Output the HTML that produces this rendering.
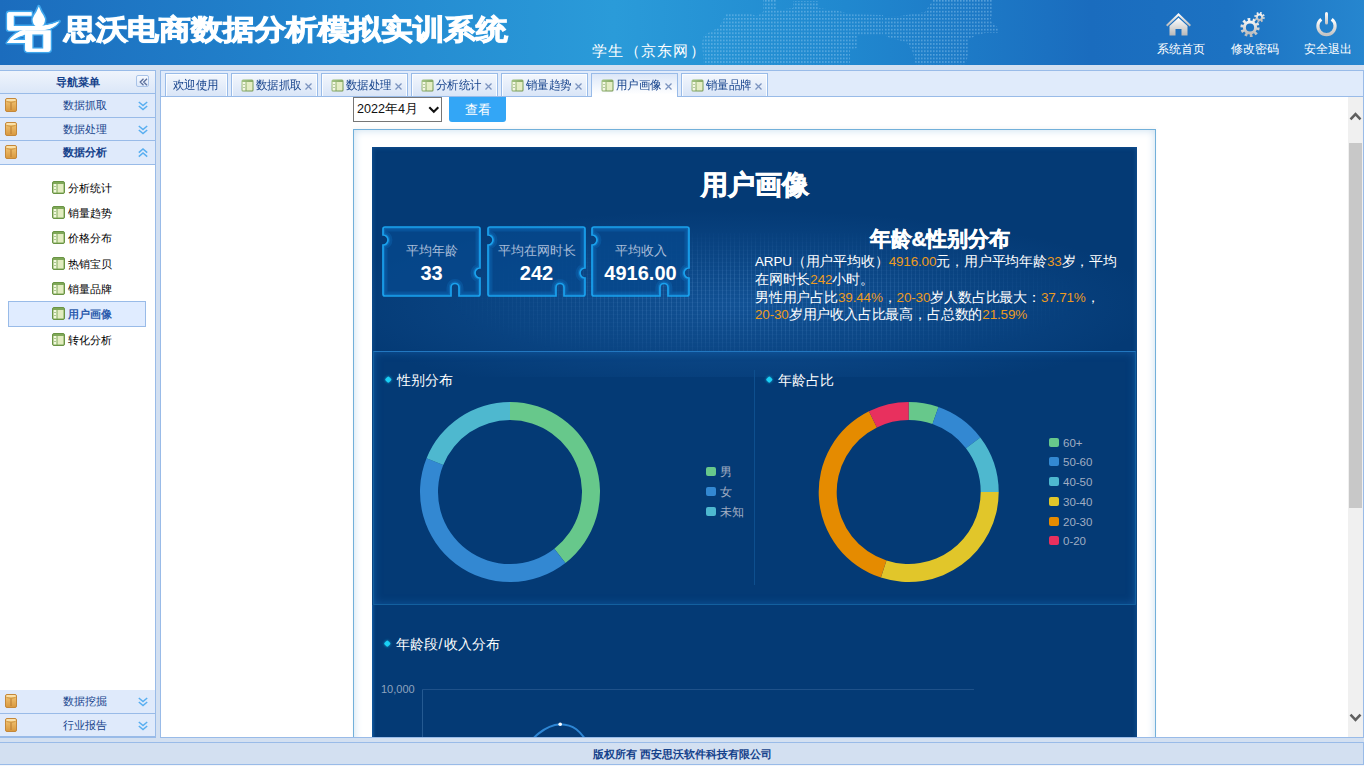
<!DOCTYPE html>
<html><head><meta charset="utf-8">
<style>
*{box-sizing:border-box;margin:0;padding:0}
html,body{width:1364px;height:766px;overflow:hidden;background:#d3e0f1;font-family:"Liberation Sans",sans-serif;font-size:12px}
.abs{position:absolute}
#hdr{left:0;top:0;width:1364px;height:65px;background:linear-gradient(90deg,#1b6cbd 0%,#2387cf 25%,#2a9bd9 45%,#2088cf 62%,#1a6cbe 80%,#1c72c2 90%,#2686cf 100%)}
#title{left:64px;top:10.5px;transform:scaleY(0.88);transform-origin:0 0;font-size:32px;font-weight:bold;color:#fff;letter-spacing:-0.3px;white-space:nowrap;-webkit-text-stroke:1.1px #fff;text-shadow:0 0 2px #3da4ea,0 0 2px #3da4ea}
#role{left:592px;top:42px;font-size:15px;color:#fff;letter-spacing:1.3px;white-space:nowrap}
.hbtn{top:41px;font-size:12px;color:#fff;white-space:nowrap;text-align:center;width:60px}
#side{left:0;top:70px;width:156px;height:668px;background:#fff;border-right:1px solid #99bbe8;border-top:1px solid #99bbe8;border-bottom:2px solid #99bbe8}
.shead{left:0;width:155px;font-size:11.4px;background:linear-gradient(#eff4fc,#dbe7f8);border-bottom:1px solid #99bbe8;color:#15428b;font-weight:bold;text-align:center}
.acc{left:0;width:155px;height:23px;background:#dfeafb;border-bottom:1px solid #99bbe8;color:#15428b;font-size:11.4px;text-align:center;line-height:22px}
.acc .ic{position:absolute;left:5px;top:4px}
.acc .ch{position:absolute;left:138px;top:6.5px;width:10px;height:10px}
.node{left:52px;width:70px;height:20px;color:#000;white-space:nowrap}
.nt{left:16px;top:2px;line-height:16px;font-size:10.6px}
.node.sel .nt{color:#2d5cad;font-weight:bold}
#selnode{left:8px;top:301px;width:138px;height:26px;background:#e0ecff;border:1px solid #99bbe8}
.al{position:absolute;left:63px;top:0}
#coll{left:136px;top:4px;width:13px;height:12px;border:1px solid #a9c3e8;border-radius:2px;background:linear-gradient(#f7faff,#dde8f8)}
#main{left:160px;top:70px;width:1204px;height:668px;background:#fff;border:1px solid #99bbe8}
#tabs{left:161px;top:71px;width:1202px;height:26px;background:#e0ebfb;border-bottom:1px solid #99bbe8}
.tab{top:73px;height:23px;border:1px solid #99bbe8;border-bottom:none;background:linear-gradient(#f3f7fd,#d9e5f7);box-shadow:inset 1px 1px 0 #fbfdff,inset -1px 0 0 #fbfdff;color:#15428b;font-size:12px;white-space:nowrap}
.tab.sel{background:linear-gradient(#dce7f8,#ffffff 85%);height:25px;box-shadow:none}
.tt{top:3px;line-height:16px;font-size:11.5px;transform:scaleX(0.955);transform-origin:0 0}
.tx{left:72.5px;top:8.5px}
#footer{left:0;top:742px;width:1364px;height:23px;border-top:1px solid #99bbe8;border-bottom:1px solid #99bbe8;background:#d3e0f1;text-align:center;color:#15428b;font-weight:bold;line-height:23px;font-size:10.9px;padding-left:2px;border-right:1px solid #99bbe8}
#content{left:161px;top:97px;width:1187px;height:640px;overflow:hidden;background:#fff}
#scroll{left:1348px;top:97px;width:15px;height:640px;background:#f0f0f0}
#thumb{left:1349px;top:143px;width:13px;height:365px;background:#c8c8c8}
#sel{left:192px;top:0px;width:89px;height:25px;border:1px solid #767676;background:#fff;font-size:12.6px;line-height:23px;padding-left:3px;color:#111}
#btn{left:288px;top:0px;width:57px;height:25px;background:#33a6f6;border-radius:0 0 3px 3px;color:#fff;text-align:center;line-height:25px;font-size:13px}
#frame{left:192px;top:32px;width:803px;height:620px;border:1px solid #72b0da;background:#fff;box-shadow:inset 0 0 8px #c6ddef,0 -2px 4px rgba(0,0,0,0.03)}
#panel{left:211px;top:50px;width:765px;height:600px;background:#043a75;overflow:hidden;box-shadow:inset 0 0 5px rgba(50,130,210,0.42)}

#glow{left:0px;top:40px;width:765px;height:190px;background:radial-gradient(ellipse 55% 50% at 48% 62%,rgba(40,120,200,0.38),rgba(40,120,200,0) 100%)}
#grid{left:60px;top:86px;width:640px;height:118px;background:repeating-linear-gradient(90deg,rgba(150,200,255,0.13) 0 1px,transparent 1px 4.2px),repeating-linear-gradient(0deg,rgba(150,200,255,0.05) 0 1px,transparent 1px 4px);-webkit-mask-image:radial-gradient(ellipse 50% 60% at 52% 55%,#000 30%,transparent 100%)}
#ptitle{left:0;top:19.5px;width:765px;text-align:center;font-size:27px;font-weight:bold;color:#fff;line-height:36px;-webkit-text-stroke:0.7px #fff}
.card{width:99px;height:71px}
.clab{left:0;top:15.7px;width:99px;text-align:center;color:#a9bdd9;font-size:13px;line-height:18px;white-space:nowrap}
.cval{left:0;top:35px;width:99px;text-align:center;color:#fff;font-size:20px;font-weight:bold;line-height:24px}
#rtitle{left:383px;top:78.5px;width:370px;text-align:center;font-size:20.6px;font-weight:bold;color:#fff;line-height:26px;-webkit-text-stroke:0.5px #fff}
#para{left:383px;top:106px;width:380px;font-size:13.5px;line-height:17.8px;color:#fff;white-space:nowrap;letter-spacing:-0.17px}
#para .o{color:#ec9b1f}
#sec2{left:1px;top:204px;width:763px;height:254px;border:1px solid #13609f;border-top-color:#2277c0;box-shadow:inset 0 0 9px rgba(30,120,205,0.42)}
#vdiv{left:382px;top:223px;width:1px;height:215px;background:#0e4f8e}
.dot{width:4.6px;height:4.6px;margin:0.7px;border-radius:1.2px;transform:rotate(45deg);background:#1ad0f5;box-shadow:0 0 3px rgba(26,208,245,0.8)}
.stitle{font-size:14px;color:#fff;line-height:18px;white-space:nowrap}
.lg{width:9.5px;height:9px;border-radius:2px}
.lt{font-size:11.5px;color:#a0adc2;line-height:16px;white-space:nowrap;margin-left:1px}
#sec3{left:0px;top:458px;width:3px;height:300px;background:linear-gradient(90deg,rgba(30,120,205,0.35),rgba(30,120,205,0))}
#ylab{left:9px;top:536px;font-size:11px;color:#8ea3be;line-height:13px}
</style></head><body>
<div id="hdr" class="abs"></div>
<svg class="abs" style="left:0;top:0" width="1364" height="65"><defs><pattern id="dots" width="3" height="3.6" patternUnits="userSpaceOnUse"><rect width="1.6" height="1.6" fill="#a8d8f8" fill-opacity="0.4"/></pattern></defs><polygon points="702,43 704,35 714,30 719,27 727,13 748,13 757,16 763,12 763,0 777,0 777,10 793,8 793,1 818,1 818,8 835,10 850,14 883,15 883,35 858,36 857,48 850,50 850,65 704,65" fill="url(#dots)"/><polygon points="884,17 900,16 912,14 925,12 933,0 993,0 993,15 990,20 998,28 998,33 985,33 975,36 968,40 968,56 965,65 916,65 912,50 906,42 890,38 884,35" fill="url(#dots)"/></svg>
<svg class="abs" style="left:0;top:0" width="64" height="60" viewBox="0 0 64 60">
<g fill="#fff" stroke="#3fa6ec" stroke-width="3.2" stroke-linejoin="round" style="paint-order:stroke">
<path d="M7.3 14 Q7.3 12.2 9.2 12.2 H31.5 V15.5 H13.5 V26 H33 Q47 26.5 59.3 21.4 Q54 28.5 45 30 L33 30.5 H9 Q7.3 30.5 7.3 28.5 Z"/>
<path d="M25.5 29.5 Q14 32 7 43 H25.6 V40 H12.5 Q19 35.5 25.5 34.5 Z"/>
<path d="M25.2 30.5 H50.5 V49 Q50.5 51.7 48 51.7 H27.7 Q25.2 51.7 25.2 49 Z M32.2 34.2 V48.8 H43.5 V34.2 Z" fill-rule="evenodd"/>
<path d="M38.8 6.4 Q41 12 43.5 15.5 Q45.5 18.5 44.8 21.5 Q43.8 26.9 38.8 26.9 Q33.8 26.9 32.8 21.5 Q32.1 18.5 34.1 15.5 Q36.6 12 38.8 6.4 Z"/>
</g>
<g fill="#fff"><path d="M7.3 14 Q7.3 12.2 9.2 12.2 H31.5 V15.5 H13.5 V26 H33 Q47 26.5 59.3 21.4 Q54 28.5 45 30 L33 30.5 H9 Q7.3 30.5 7.3 28.5 Z"/><path d="M25.5 29.5 Q14 32 7 43 H25.6 V40 H12.5 Q19 35.5 25.5 34.5 Z"/><path d="M25.2 30.5 H50.5 V49 Q50.5 51.7 48 51.7 H27.7 Q25.2 51.7 25.2 49 Z M32.2 34.2 V48.8 H43.5 V34.2 Z" fill-rule="evenodd"/></g>
</svg>
<svg class="abs" style="left:1165px;top:12px" width="27" height="25" viewBox="0 0 27 25"><defs><linearGradient id="hg" x1="0" y1="0" x2="0" y2="1"><stop offset="0" stop-color="#ffffff"/><stop offset="1" stop-color="#b8b8b8"/></linearGradient></defs><path d="M13.5 1 L26 13 L24.6 14.4 L13.5 4 L2.4 14.4 L1 13 Z" fill="url(#hg)"/><path d="M4.5 14 L13.5 5.8 L22.5 14 V23.5 H16.5 V17 H10.5 V23.5 H4.5 Z" fill="url(#hg)"/></svg>
<svg class="abs" style="left:1240px;top:11px" width="26" height="27" viewBox="0 0 26 27"><defs><linearGradient id="gg" x1="0" y1="0" x2="0" y2="1"><stop offset="0" stop-color="#f4f4f4"/><stop offset="1" stop-color="#bdbdbd"/></linearGradient></defs>
<g fill="none" stroke="url(#gg)"><circle cx="10" cy="16.5" r="5.6" stroke-width="3"/><circle cx="10" cy="16.5" r="8" stroke-width="3.2" stroke-dasharray="2.6 2.42"/><circle cx="19.5" cy="6.2" r="2.7" stroke-width="2"/><circle cx="19.5" cy="6.2" r="4.3" stroke-width="2" stroke-dasharray="1.7 1.68"/></g></svg>
<svg class="abs" style="left:1315px;top:11px" width="23" height="27" viewBox="0 0 23 27"><defs><linearGradient id="pg" x1="0" y1="0" x2="0" y2="1"><stop offset="0" stop-color="#ffffff"/><stop offset="1" stop-color="#c4c4c4"/></linearGradient></defs><path d="M6.3 8.2 A8.6 8.6 0 1 0 16.7 8.2" fill="none" stroke="url(#pg)" stroke-width="3.2"/><rect x="10" y="1" width="3" height="12.5" rx="1.5" fill="url(#pg)"/></svg>
<div id="title" class="abs">思沃电商数据分析模拟实训系统</div>
<div id="role" class="abs">学生（京东网）</div>
<div class="abs hbtn" style="left:1151px">系统首页</div>
<div class="abs hbtn" style="left:1225px">修改密码</div>
<div class="abs hbtn" style="left:1298px">安全退出</div>

<div id="side" class="abs"></div>
<div class="abs shead" style="top:71px;height:23px;line-height:22px">导航菜单<div class="abs" id="coll"><svg class="abs" style="left:2px;top:2px" width="9" height="8" viewBox="0 0 9 8"><path d="M4.5 0.8 L1.2 4 L4.5 7.2 M8 0.8 L4.7 4 L8 7.2" fill="none" stroke="#5c6f9c" stroke-width="1.3"/></svg></div></div>
<div class="abs acc" style="top:94px;height:24px"><svg class="ic" width="12" height="14" viewBox="0 0 12 14"><defs><linearGradient id="og" x1="0" y1="0" x2="0" y2="1"><stop offset="0" stop-color="#f4c878"/><stop offset="1" stop-color="#d8983e"/></linearGradient></defs><rect x="0.5" y="0.5" width="11" height="13" rx="1.5" fill="url(#og)" stroke="#c4883a" stroke-width="1"/><path d="M1.5 2 H10.5" stroke="#fff1c8" stroke-width="1.3"/><path d="M1.5 3.5 Q6 5.5 10.5 3.5" fill="none" stroke="#c8903e" stroke-width="0.8"/><path d="M6 4.8 V12" stroke="#b87a30" stroke-width="1"/></svg><span class="al">数据抓取</span><svg class="ch" width="10" height="10" viewBox="0 0 10 10"><path d="M0.8 1 L5 4.6 L9.2 1 M0.8 5 L5 8.6 L9.2 5" fill="none" stroke="#58aef0" stroke-width="1.5"/></svg></div>
<div class="abs acc" style="top:118px"><svg class="ic" width="12" height="14" viewBox="0 0 12 14"><defs><linearGradient id="og" x1="0" y1="0" x2="0" y2="1"><stop offset="0" stop-color="#f4c878"/><stop offset="1" stop-color="#d8983e"/></linearGradient></defs><rect x="0.5" y="0.5" width="11" height="13" rx="1.5" fill="url(#og)" stroke="#c4883a" stroke-width="1"/><path d="M1.5 2 H10.5" stroke="#fff1c8" stroke-width="1.3"/><path d="M1.5 3.5 Q6 5.5 10.5 3.5" fill="none" stroke="#c8903e" stroke-width="0.8"/><path d="M6 4.8 V12" stroke="#b87a30" stroke-width="1"/></svg><span class="al">数据处理</span><svg class="ch" width="10" height="10" viewBox="0 0 10 10"><path d="M0.8 1 L5 4.6 L9.2 1 M0.8 5 L5 8.6 L9.2 5" fill="none" stroke="#58aef0" stroke-width="1.5"/></svg></div>
<div class="abs acc" style="top:141px;height:24px;font-weight:bold"><svg class="ic" width="12" height="14" viewBox="0 0 12 14"><defs><linearGradient id="og" x1="0" y1="0" x2="0" y2="1"><stop offset="0" stop-color="#f4c878"/><stop offset="1" stop-color="#d8983e"/></linearGradient></defs><rect x="0.5" y="0.5" width="11" height="13" rx="1.5" fill="url(#og)" stroke="#c4883a" stroke-width="1"/><path d="M1.5 2 H10.5" stroke="#fff1c8" stroke-width="1.3"/><path d="M1.5 3.5 Q6 5.5 10.5 3.5" fill="none" stroke="#c8903e" stroke-width="0.8"/><path d="M6 4.8 V12" stroke="#b87a30" stroke-width="1"/></svg><span class="al">数据分析</span><svg class="ch" width="10" height="10" viewBox="0 0 10 10"><path d="M0.8 4.6 L5 1 L9.2 4.6 M0.8 8.6 L5 5 L9.2 8.6" fill="none" stroke="#58aef0" stroke-width="1.5"/></svg></div>
<div class="abs acc" style="top:690px;height:24px"><svg class="ic" width="12" height="14" viewBox="0 0 12 14"><defs><linearGradient id="og" x1="0" y1="0" x2="0" y2="1"><stop offset="0" stop-color="#f4c878"/><stop offset="1" stop-color="#d8983e"/></linearGradient></defs><rect x="0.5" y="0.5" width="11" height="13" rx="1.5" fill="url(#og)" stroke="#c4883a" stroke-width="1"/><path d="M1.5 2 H10.5" stroke="#fff1c8" stroke-width="1.3"/><path d="M1.5 3.5 Q6 5.5 10.5 3.5" fill="none" stroke="#c8903e" stroke-width="0.8"/><path d="M6 4.8 V12" stroke="#b87a30" stroke-width="1"/></svg><span class="al">数据挖掘</span><svg class="ch" width="10" height="10" viewBox="0 0 10 10"><path d="M0.8 1 L5 4.6 L9.2 1 M0.8 5 L5 8.6 L9.2 5" fill="none" stroke="#58aef0" stroke-width="1.5"/></svg></div>
<div class="abs acc" style="top:714px;height:22px;border-bottom:none"><svg class="ic" width="12" height="14" viewBox="0 0 12 14"><defs><linearGradient id="og" x1="0" y1="0" x2="0" y2="1"><stop offset="0" stop-color="#f4c878"/><stop offset="1" stop-color="#d8983e"/></linearGradient></defs><rect x="0.5" y="0.5" width="11" height="13" rx="1.5" fill="url(#og)" stroke="#c4883a" stroke-width="1"/><path d="M1.5 2 H10.5" stroke="#fff1c8" stroke-width="1.3"/><path d="M1.5 3.5 Q6 5.5 10.5 3.5" fill="none" stroke="#c8903e" stroke-width="0.8"/><path d="M6 4.8 V12" stroke="#b87a30" stroke-width="1"/></svg><span class="al">行业报告</span><svg class="ch" width="10" height="10" viewBox="0 0 10 10"><path d="M0.8 1 L5 4.6 L9.2 1 M0.8 5 L5 8.6 L9.2 5" fill="none" stroke="#58aef0" stroke-width="1.5"/></svg></div>

<div class="abs" id="selnode"></div>
<div class="abs node" style="top:178.0px"><svg class="abs" style="left:0;top:3px" width="13" height="13" viewBox="0 0 13 13"><rect x="0.5" y="0.5" width="12" height="12" rx="1.5" fill="#7fa858" stroke="#6a9444" stroke-width="1"/><rect x="1.5" y="3" width="3" height="8.5" fill="#f2f8de"/><rect x="5.5" y="3" width="6" height="8.5" fill="#e2ecc0"/><rect x="2.5" y="5" width="1" height="1" fill="#6a9444"/><rect x="2.5" y="8" width="1" height="1" fill="#6a9444"/></svg><span class="abs nt">分析统计</span></div>
<div class="abs node" style="top:203.0px"><svg class="abs" style="left:0;top:3px" width="13" height="13" viewBox="0 0 13 13"><rect x="0.5" y="0.5" width="12" height="12" rx="1.5" fill="#7fa858" stroke="#6a9444" stroke-width="1"/><rect x="1.5" y="3" width="3" height="8.5" fill="#f2f8de"/><rect x="5.5" y="3" width="6" height="8.5" fill="#e2ecc0"/><rect x="2.5" y="5" width="1" height="1" fill="#6a9444"/><rect x="2.5" y="8" width="1" height="1" fill="#6a9444"/></svg><span class="abs nt">销量趋势</span></div>
<div class="abs node" style="top:228.3px"><svg class="abs" style="left:0;top:3px" width="13" height="13" viewBox="0 0 13 13"><rect x="0.5" y="0.5" width="12" height="12" rx="1.5" fill="#7fa858" stroke="#6a9444" stroke-width="1"/><rect x="1.5" y="3" width="3" height="8.5" fill="#f2f8de"/><rect x="5.5" y="3" width="6" height="8.5" fill="#e2ecc0"/><rect x="2.5" y="5" width="1" height="1" fill="#6a9444"/><rect x="2.5" y="8" width="1" height="1" fill="#6a9444"/></svg><span class="abs nt">价格分布</span></div>
<div class="abs node" style="top:253.5px"><svg class="abs" style="left:0;top:3px" width="13" height="13" viewBox="0 0 13 13"><rect x="0.5" y="0.5" width="12" height="12" rx="1.5" fill="#7fa858" stroke="#6a9444" stroke-width="1"/><rect x="1.5" y="3" width="3" height="8.5" fill="#f2f8de"/><rect x="5.5" y="3" width="6" height="8.5" fill="#e2ecc0"/><rect x="2.5" y="5" width="1" height="1" fill="#6a9444"/><rect x="2.5" y="8" width="1" height="1" fill="#6a9444"/></svg><span class="abs nt">热销宝贝</span></div>
<div class="abs node" style="top:278.5px"><svg class="abs" style="left:0;top:3px" width="13" height="13" viewBox="0 0 13 13"><rect x="0.5" y="0.5" width="12" height="12" rx="1.5" fill="#7fa858" stroke="#6a9444" stroke-width="1"/><rect x="1.5" y="3" width="3" height="8.5" fill="#f2f8de"/><rect x="5.5" y="3" width="6" height="8.5" fill="#e2ecc0"/><rect x="2.5" y="5" width="1" height="1" fill="#6a9444"/><rect x="2.5" y="8" width="1" height="1" fill="#6a9444"/></svg><span class="abs nt">销量品牌</span></div>
<div class="abs node sel" style="top:304.0px"><svg class="abs" style="left:0;top:3px" width="13" height="13" viewBox="0 0 13 13"><rect x="0.5" y="0.5" width="12" height="12" rx="1.5" fill="#7fa858" stroke="#6a9444" stroke-width="1"/><rect x="1.5" y="3" width="3" height="8.5" fill="#f2f8de"/><rect x="5.5" y="3" width="6" height="8.5" fill="#e2ecc0"/><rect x="2.5" y="5" width="1" height="1" fill="#6a9444"/><rect x="2.5" y="8" width="1" height="1" fill="#6a9444"/></svg><span class="abs nt">用户画像</span></div>
<div class="abs node" style="top:330.0px"><svg class="abs" style="left:0;top:3px" width="13" height="13" viewBox="0 0 13 13"><rect x="0.5" y="0.5" width="12" height="12" rx="1.5" fill="#7fa858" stroke="#6a9444" stroke-width="1"/><rect x="1.5" y="3" width="3" height="8.5" fill="#f2f8de"/><rect x="5.5" y="3" width="6" height="8.5" fill="#e2ecc0"/><rect x="2.5" y="5" width="1" height="1" fill="#6a9444"/><rect x="2.5" y="8" width="1" height="1" fill="#6a9444"/></svg><span class="abs nt">转化分析</span></div>
<div id="main" class="abs"></div>
<div id="tabs" class="abs"></div>
<div class="abs tab" style="left:165px;width:63px"><span class="abs tt" style="left:7px">欢迎使用</span></div>
<div class="abs tab" style="left:231px;width:87px"><svg class="abs" style="left:9px;top:5px" width="13" height="13" viewBox="0 0 13 13"><defs><linearGradient id="ig1" x1="0" y1="0" x2="1" y2="1"><stop offset="0" stop-color="#a8c888"/><stop offset="1" stop-color="#6a8e48"/></linearGradient></defs><rect x="0.5" y="0.5" width="12" height="12" rx="1.5" fill="url(#ig1)"/><rect x="1.5" y="3" width="3" height="8.5" fill="#f4f8e4"/><rect x="5.5" y="3" width="6" height="8.5" fill="#e4edc4"/><rect x="2.5" y="5" width="1" height="1" fill="#7a9a58"/><rect x="2.5" y="8" width="1" height="1" fill="#7a9a58"/></svg><span class="abs tt" style="left:23.5px">数据抓取</span><svg class="abs tx" width="7" height="7" viewBox="0 0 7 7"><path d="M0.5 0.5 L6.5 6.5 M6.5 0.5 L0.5 6.5" stroke="#7b93bf" stroke-width="1.3"/></svg></div>
<div class="abs tab" style="left:321px;width:87px"><svg class="abs" style="left:9px;top:5px" width="13" height="13" viewBox="0 0 13 13"><defs><linearGradient id="ig2" x1="0" y1="0" x2="1" y2="1"><stop offset="0" stop-color="#a8c888"/><stop offset="1" stop-color="#6a8e48"/></linearGradient></defs><rect x="0.5" y="0.5" width="12" height="12" rx="1.5" fill="url(#ig2)"/><rect x="1.5" y="3" width="3" height="8.5" fill="#f4f8e4"/><rect x="5.5" y="3" width="6" height="8.5" fill="#e4edc4"/><rect x="2.5" y="5" width="1" height="1" fill="#7a9a58"/><rect x="2.5" y="8" width="1" height="1" fill="#7a9a58"/></svg><span class="abs tt" style="left:23.5px">数据处理</span><svg class="abs tx" width="7" height="7" viewBox="0 0 7 7"><path d="M0.5 0.5 L6.5 6.5 M6.5 0.5 L0.5 6.5" stroke="#7b93bf" stroke-width="1.3"/></svg></div>
<div class="abs tab" style="left:411px;width:87px"><svg class="abs" style="left:9px;top:5px" width="13" height="13" viewBox="0 0 13 13"><defs><linearGradient id="ig3" x1="0" y1="0" x2="1" y2="1"><stop offset="0" stop-color="#a8c888"/><stop offset="1" stop-color="#6a8e48"/></linearGradient></defs><rect x="0.5" y="0.5" width="12" height="12" rx="1.5" fill="url(#ig3)"/><rect x="1.5" y="3" width="3" height="8.5" fill="#f4f8e4"/><rect x="5.5" y="3" width="6" height="8.5" fill="#e4edc4"/><rect x="2.5" y="5" width="1" height="1" fill="#7a9a58"/><rect x="2.5" y="8" width="1" height="1" fill="#7a9a58"/></svg><span class="abs tt" style="left:23.5px">分析统计</span><svg class="abs tx" width="7" height="7" viewBox="0 0 7 7"><path d="M0.5 0.5 L6.5 6.5 M6.5 0.5 L0.5 6.5" stroke="#7b93bf" stroke-width="1.3"/></svg></div>
<div class="abs tab" style="left:501px;width:87px"><svg class="abs" style="left:9px;top:5px" width="13" height="13" viewBox="0 0 13 13"><defs><linearGradient id="ig4" x1="0" y1="0" x2="1" y2="1"><stop offset="0" stop-color="#a8c888"/><stop offset="1" stop-color="#6a8e48"/></linearGradient></defs><rect x="0.5" y="0.5" width="12" height="12" rx="1.5" fill="url(#ig4)"/><rect x="1.5" y="3" width="3" height="8.5" fill="#f4f8e4"/><rect x="5.5" y="3" width="6" height="8.5" fill="#e4edc4"/><rect x="2.5" y="5" width="1" height="1" fill="#7a9a58"/><rect x="2.5" y="8" width="1" height="1" fill="#7a9a58"/></svg><span class="abs tt" style="left:23.5px">销量趋势</span><svg class="abs tx" width="7" height="7" viewBox="0 0 7 7"><path d="M0.5 0.5 L6.5 6.5 M6.5 0.5 L0.5 6.5" stroke="#7b93bf" stroke-width="1.3"/></svg></div>
<div class="abs tab sel" style="left:591px;width:87px"><svg class="abs" style="left:9px;top:5px" width="13" height="13" viewBox="0 0 13 13"><defs><linearGradient id="ig5" x1="0" y1="0" x2="1" y2="1"><stop offset="0" stop-color="#a8c888"/><stop offset="1" stop-color="#6a8e48"/></linearGradient></defs><rect x="0.5" y="0.5" width="12" height="12" rx="1.5" fill="url(#ig5)"/><rect x="1.5" y="3" width="3" height="8.5" fill="#f4f8e4"/><rect x="5.5" y="3" width="6" height="8.5" fill="#e4edc4"/><rect x="2.5" y="5" width="1" height="1" fill="#7a9a58"/><rect x="2.5" y="8" width="1" height="1" fill="#7a9a58"/></svg><span class="abs tt" style="left:23.5px">用户画像</span><svg class="abs tx" width="7" height="7" viewBox="0 0 7 7"><path d="M0.5 0.5 L6.5 6.5 M6.5 0.5 L0.5 6.5" stroke="#7b93bf" stroke-width="1.3"/></svg></div>
<div class="abs tab" style="left:681px;width:87px"><svg class="abs" style="left:9px;top:5px" width="13" height="13" viewBox="0 0 13 13"><defs><linearGradient id="ig6" x1="0" y1="0" x2="1" y2="1"><stop offset="0" stop-color="#a8c888"/><stop offset="1" stop-color="#6a8e48"/></linearGradient></defs><rect x="0.5" y="0.5" width="12" height="12" rx="1.5" fill="url(#ig6)"/><rect x="1.5" y="3" width="3" height="8.5" fill="#f4f8e4"/><rect x="5.5" y="3" width="6" height="8.5" fill="#e4edc4"/><rect x="2.5" y="5" width="1" height="1" fill="#7a9a58"/><rect x="2.5" y="8" width="1" height="1" fill="#7a9a58"/></svg><span class="abs tt" style="left:23.5px">销量品牌</span><svg class="abs tx" width="7" height="7" viewBox="0 0 7 7"><path d="M0.5 0.5 L6.5 6.5 M6.5 0.5 L0.5 6.5" stroke="#7b93bf" stroke-width="1.3"/></svg></div>


<div id="content" class="abs">
<div id="sel" class="abs">2022年4月<svg class="abs" style="left:74px;top:8px" width="12" height="8" viewBox="0 0 12 8"><path d="M1.3 1.3 L5.8 5.8 L10.3 1.3" fill="none" stroke="#111" stroke-width="2.1"/></svg></div>
<div id="btn" class="abs">查看</div>
<div id="frame" class="abs"></div>
<div id="panel" class="abs"><div class="abs" id="glow"></div><div class="abs" id="grid"></div>
<div class="abs" id="ptitle">用户画像</div>
<div class="abs card" style="left:10px;top:79px"><svg class="abs" style="left:0;top:0" width="99" height="71" viewBox="0 0 99 71"><defs><clipPath id="cp10"><path d="M3 1 H96 Q98 1 98 3 V42 A5 5 0 0 0 98 52 V68 Q98 70 96 70 H77 V61.5 A4 4 0 0 0 69 61.5 V70 H3 Q1 70 1 68 V19 A5 5 0 0 0 1 9 V3 Q1 1 3 1 Z"/></clipPath></defs><path d="M3 1 H96 Q98 1 98 3 V42 A5 5 0 0 0 98 52 V68 Q98 70 96 70 H77 V61.5 A4 4 0 0 0 69 61.5 V70 H3 Q1 70 1 68 V19 A5 5 0 0 0 1 9 V3 Q1 1 3 1 Z" fill="#06488c" fill-opacity="0.82"/><path d="M3 1 H96 Q98 1 98 3 V42 A5 5 0 0 0 98 52 V68 Q98 70 96 70 H77 V61.5 A4 4 0 0 0 69 61.5 V70 H3 Q1 70 1 68 V19 A5 5 0 0 0 1 9 V3 Q1 1 3 1 Z" fill="none" stroke="#1a9cf0" stroke-width="9" stroke-opacity="0.16" clip-path="url(#cp10)"/><path d="M3 1 H96 Q98 1 98 3 V42 A5 5 0 0 0 98 52 V68 Q98 70 96 70 H77 V61.5 A4 4 0 0 0 69 61.5 V70 H3 Q1 70 1 68 V19 A5 5 0 0 0 1 9 V3 Q1 1 3 1 Z" fill="none" stroke="#1a9cf0" stroke-width="4.5" stroke-opacity="0.25" clip-path="url(#cp10)"/><path d="M3 1 H96 Q98 1 98 3 V42 A5 5 0 0 0 98 52 V68 Q98 70 96 70 H77 V61.5 A4 4 0 0 0 69 61.5 V70 H3 Q1 70 1 68 V19 A5 5 0 0 0 1 9 V3 Q1 1 3 1 Z" fill="none" stroke="#1aa2ee" stroke-width="1.7"/></svg><div class="abs clab">平均年龄</div><div class="abs cval">33</div></div><div class="abs card" style="left:115px;top:79px"><svg class="abs" style="left:0;top:0" width="99" height="71" viewBox="0 0 99 71"><defs><clipPath id="cp115"><path d="M3 1 H96 Q98 1 98 3 V42 A5 5 0 0 0 98 52 V68 Q98 70 96 70 H77 V61.5 A4 4 0 0 0 69 61.5 V70 H3 Q1 70 1 68 V19 A5 5 0 0 0 1 9 V3 Q1 1 3 1 Z"/></clipPath></defs><path d="M3 1 H96 Q98 1 98 3 V42 A5 5 0 0 0 98 52 V68 Q98 70 96 70 H77 V61.5 A4 4 0 0 0 69 61.5 V70 H3 Q1 70 1 68 V19 A5 5 0 0 0 1 9 V3 Q1 1 3 1 Z" fill="#06488c" fill-opacity="0.82"/><path d="M3 1 H96 Q98 1 98 3 V42 A5 5 0 0 0 98 52 V68 Q98 70 96 70 H77 V61.5 A4 4 0 0 0 69 61.5 V70 H3 Q1 70 1 68 V19 A5 5 0 0 0 1 9 V3 Q1 1 3 1 Z" fill="none" stroke="#1a9cf0" stroke-width="9" stroke-opacity="0.16" clip-path="url(#cp115)"/><path d="M3 1 H96 Q98 1 98 3 V42 A5 5 0 0 0 98 52 V68 Q98 70 96 70 H77 V61.5 A4 4 0 0 0 69 61.5 V70 H3 Q1 70 1 68 V19 A5 5 0 0 0 1 9 V3 Q1 1 3 1 Z" fill="none" stroke="#1a9cf0" stroke-width="4.5" stroke-opacity="0.25" clip-path="url(#cp115)"/><path d="M3 1 H96 Q98 1 98 3 V42 A5 5 0 0 0 98 52 V68 Q98 70 96 70 H77 V61.5 A4 4 0 0 0 69 61.5 V70 H3 Q1 70 1 68 V19 A5 5 0 0 0 1 9 V3 Q1 1 3 1 Z" fill="none" stroke="#1aa2ee" stroke-width="1.7"/></svg><div class="abs clab">平均在网时长</div><div class="abs cval">242</div></div><div class="abs card" style="left:219px;top:79px"><svg class="abs" style="left:0;top:0" width="99" height="71" viewBox="0 0 99 71"><defs><clipPath id="cp219"><path d="M3 1 H96 Q98 1 98 3 V42 A5 5 0 0 0 98 52 V68 Q98 70 96 70 H77 V61.5 A4 4 0 0 0 69 61.5 V70 H3 Q1 70 1 68 V19 A5 5 0 0 0 1 9 V3 Q1 1 3 1 Z"/></clipPath></defs><path d="M3 1 H96 Q98 1 98 3 V42 A5 5 0 0 0 98 52 V68 Q98 70 96 70 H77 V61.5 A4 4 0 0 0 69 61.5 V70 H3 Q1 70 1 68 V19 A5 5 0 0 0 1 9 V3 Q1 1 3 1 Z" fill="#06488c" fill-opacity="0.82"/><path d="M3 1 H96 Q98 1 98 3 V42 A5 5 0 0 0 98 52 V68 Q98 70 96 70 H77 V61.5 A4 4 0 0 0 69 61.5 V70 H3 Q1 70 1 68 V19 A5 5 0 0 0 1 9 V3 Q1 1 3 1 Z" fill="none" stroke="#1a9cf0" stroke-width="9" stroke-opacity="0.16" clip-path="url(#cp219)"/><path d="M3 1 H96 Q98 1 98 3 V42 A5 5 0 0 0 98 52 V68 Q98 70 96 70 H77 V61.5 A4 4 0 0 0 69 61.5 V70 H3 Q1 70 1 68 V19 A5 5 0 0 0 1 9 V3 Q1 1 3 1 Z" fill="none" stroke="#1a9cf0" stroke-width="4.5" stroke-opacity="0.25" clip-path="url(#cp219)"/><path d="M3 1 H96 Q98 1 98 3 V42 A5 5 0 0 0 98 52 V68 Q98 70 96 70 H77 V61.5 A4 4 0 0 0 69 61.5 V70 H3 Q1 70 1 68 V19 A5 5 0 0 0 1 9 V3 Q1 1 3 1 Z" fill="none" stroke="#1aa2ee" stroke-width="1.7"/></svg><div class="abs clab">平均收入</div><div class="abs cval">4916.00</div></div>
<div class="abs" id="rtitle">年龄&amp;性别分布</div>
<div class="abs" id="para">ARPU（用户平均收）<span class="o">4916.00</span>元，用户平均年龄<span class="o">33</span>岁，平均<br>在网时长<span class="o">242</span>小时。<br>男性用户占比<span class="o">39.44%</span>，<span class="o">20-30</span>岁人数占比最大：<span class="o">37.71%</span>，<br><span class="o">20-30</span>岁用户收入占比最高，占总数的<span class="o">21.59%</span></div>
<div class="abs" id="sec2"></div>
<div class="abs" id="vdiv"></div>
<div class="abs dot" style="left:13.5px;top:229.5px"></div><div class="abs stitle" style="left:25px;top:224px">性别分布</div>
<div class="abs dot" style="left:394.5px;top:229.5px"></div><div class="abs stitle" style="left:406px;top:224px">年龄占比</div>
<svg class="abs" style="left:0;top:0" width="765" height="600"><path d="M138.00 255.00 A90 90 0 0 1 193.41 415.92 L182.33 401.74 A72 72 0 0 0 138.00 273.00 Z" fill="#67c88b"/><path d="M193.41 415.92 A90 90 0 0 1 54.55 311.29 L71.24 318.03 A72 72 0 0 0 182.33 401.74 Z" fill="#3388d2"/><path d="M54.55 311.29 A90 90 0 0 1 138.00 255.00 L138.00 273.00 A72 72 0 0 0 71.24 318.03 Z" fill="#4eb8cf"/><path d="M536.70 255.00 A90 90 0 0 1 566.45 260.06 L560.50 277.05 A72 72 0 0 0 536.70 273.00 Z" fill="#67c88b"/><path d="M566.45 260.06 A90 90 0 0 1 608.29 290.46 L593.97 301.37 A72 72 0 0 0 560.50 277.05 Z" fill="#3388d2"/><path d="M608.29 290.46 A90 90 0 0 1 626.70 345.00 L608.70 345.00 A72 72 0 0 0 593.97 301.37 Z" fill="#4eb8cf"/><path d="M626.70 345.00 A90 90 0 0 1 508.89 430.60 L514.45 413.48 A72 72 0 0 0 608.70 345.00 Z" fill="#e1c62a"/><path d="M508.89 430.60 A90 90 0 0 1 496.96 264.25 L504.91 280.40 A72 72 0 0 0 514.45 413.48 Z" fill="#e58b00"/><path d="M496.96 264.25 A90 90 0 0 1 536.70 255.00 L536.70 273.00 A72 72 0 0 0 504.91 280.40 Z" fill="#e8305e"/></svg>
<div class="abs lg" style="left:334px;top:320.4px;background:#67c88b"></div><div class="abs lt" style="left:347px;top:317.4px">男</div><div class="abs lg" style="left:334px;top:340.1px;background:#3388d2"></div><div class="abs lt" style="left:347px;top:337.1px">女</div><div class="abs lg" style="left:334px;top:359.8px;background:#4eb8cf"></div><div class="abs lt" style="left:347px;top:356.8px">未知</div><div class="abs lg" style="left:677px;top:290.7px;background:#67c88b"></div><div class="abs lt" style="left:690px;top:287.7px">60+</div><div class="abs lg" style="left:677px;top:310.4px;background:#3388d2"></div><div class="abs lt" style="left:690px;top:307.4px">50-60</div><div class="abs lg" style="left:677px;top:330.2px;background:#4eb8cf"></div><div class="abs lt" style="left:690px;top:327.2px">40-50</div><div class="abs lg" style="left:677px;top:349.9px;background:#e1c62a"></div><div class="abs lt" style="left:690px;top:346.9px">30-40</div><div class="abs lg" style="left:677px;top:369.7px;background:#e58b00"></div><div class="abs lt" style="left:690px;top:366.7px">20-30</div><div class="abs lg" style="left:677px;top:389.4px;background:#e8305e"></div><div class="abs lt" style="left:690px;top:386.4px">0-20</div>
<div class="abs" id="sec3"></div>
<div class="abs dot" style="left:12.5px;top:493.5px"></div><div class="abs stitle" style="left:23.5px;top:488px">年龄段<span style="margin:0 1.5px 0 1px">/</span>收入分布</div>
<div class="abs" id="ylab">10,000</div>
<svg class="abs" style="left:0;top:0" width="765" height="600"><line x1="50.5" y1="542.5" x2="602" y2="542.5" stroke="#1f5189" stroke-width="1"/><line x1="50.5" y1="542.5" x2="50.5" y2="600" stroke="#255a92" stroke-width="1"/><path d="M150 604 C160 592 172 578 188.2 577.2 C202 577.5 208 584 216 596" fill="none" stroke="#2e86d4" stroke-width="2"/><circle cx="188.2" cy="577.2" r="1.8" fill="#fff"/></svg>
</div>
</div>
<div id="scroll" class="abs"></div>
<div id="thumb" class="abs"></div><svg class="abs" style="left:1349px;top:111px" width="13" height="10" viewBox="0 0 13 10"><path d="M1.5 8.3 L6.5 3.2 L11.5 8.3" fill="none" stroke="#5f5f5f" stroke-width="2.6"/></svg><svg class="abs" style="left:1349px;top:713px" width="13" height="10" viewBox="0 0 13 10"><path d="M1.5 1.7 L6.5 6.8 L11.5 1.7" fill="none" stroke="#5f5f5f" stroke-width="2.6"/></svg>
<div class="abs" style="left:0;top:765px;width:1364px;height:1px;background:#f4f6fa"></div><div id="footer" class="abs">版权所有 西安思沃软件科技有限公司</div>
</body></html>
